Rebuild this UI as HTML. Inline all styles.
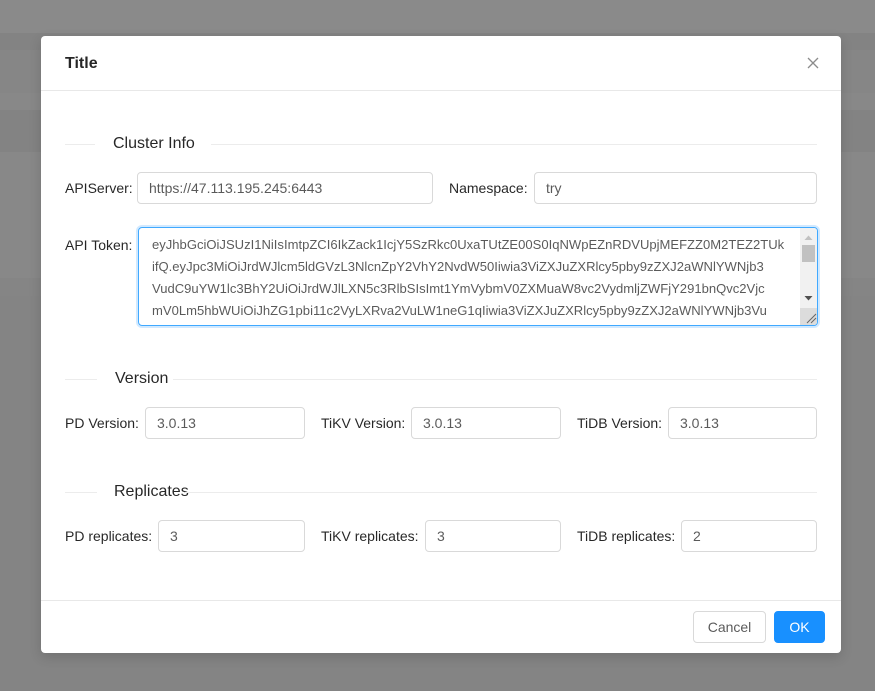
<!DOCTYPE html>
<html><head><meta charset="utf-8"><style>
*{box-sizing:border-box;margin:0;padding:0}
html,body{width:875px;height:691px;overflow:hidden}
body{position:relative;font-family:"Liberation Sans","Noto Sans CJK SC",sans-serif;font-size:14px;color:rgba(0,0,0,.85);background:#848484}
.band{position:absolute;left:0;width:875px}
.modal{position:absolute;left:41px;top:36px;width:800px;height:617px;background:#fff;border-radius:4px;box-shadow:0 4px 12px rgba(0,0,0,.15)}
.a{position:absolute}
.title{left:24px;top:18px;font-size:16px;font-weight:bold;color:rgba(0,0,0,.85);line-height:20px}
.hline{left:0;width:800px;height:1px;background:#e8e8e8}
.dl{height:1px;background:#ececec}
.dt{font-size:16px;line-height:20px;color:rgba(0,0,0,.85)}
.lbl{line-height:20px;color:rgba(0,0,0,.85);white-space:nowrap}
.inp{height:32px;border:1px solid #d9d9d9;border-radius:4px;padding:0 11px;line-height:30px;color:rgba(0,0,0,.65);white-space:nowrap}
.ta{border:1px solid #40a9ff;box-shadow:0 0 0 2px rgba(24,144,255,.2);border-radius:4px;overflow:hidden;color:rgba(0,0,0,.65)}
.ta .l{position:absolute;left:13px;line-height:22px;white-space:nowrap;font-size:13.05px;letter-spacing:0}
.btn{height:32px;border-radius:4px;line-height:30px;text-align:center;font-size:14px}
</style></head><body>
<div class="band" style="top:0;height:33px;background:#8a8a8a"></div>
<div class="band" style="top:33px;height:17px;background:#838383"></div>
<div class="band" style="top:50px;height:43px;background:#868686"></div>
<div class="band" style="top:93px;height:17px;background:#888"></div>
<div class="band" style="top:110px;height:42px;background:#838383"></div>
<div class="band" style="top:152px;height:126px;background:#888"></div>
<div class="band" style="top:278px;height:18px;background:#858585"></div>

<div class="modal">
  <div class="a title">Title</div>
  <svg class="a" style="left:766px;top:21px" width="12" height="12" viewBox="0 0 12 12"><path d="M1 1L11 11M11 1L1 11" stroke="#8c8c8c" stroke-width="1.3"/></svg>
  <div class="a hline" style="top:54px"></div>

  <div class="a dl" style="left:24px;top:108px;width:30px"></div>
  <div class="a dt" style="left:72px;top:98px">Cluster Info</div>
  <div class="a dl" style="left:170px;top:108px;width:606px"></div>

  <div class="a lbl" style="left:24px;top:142px">APIServer:</div>
  <div class="a inp" style="left:96px;top:136px;width:296px">https://47.113.195.245:6443</div>
  <div class="a lbl" style="left:408px;top:142px">Namespace:</div>
  <div class="a inp" style="left:493px;top:136px;width:283px">try</div>

  <div class="a lbl" style="left:24px;top:199px">API Token:</div>
  <div class="a ta" style="left:97px;top:191px;width:680px;height:99px">
    <div class="l" style="top:6px">eyJhbGciOiJSUzI1NiIsImtpZCI6IkZack1IcjY5SzRkc0UxaTUtZE00S0IqNWpEZnRDVUpjMEFZZ0M2TEZ2TUk</div>
    <div class="l" style="top:28px">ifQ.eyJpc3MiOiJrdWJlcm5ldGVzL3NlcnZpY2VhY2NvdW50Iiwia3ViZXJuZXRlcy5pby9zZXJ2aWNlYWNjb3</div>
    <div class="l" style="top:50px">VudC9uYW1lc3BhY2UiOiJrdWJlLXN5c3RlbSIsImt1YmVybmV0ZXMuaW8vc2VydmljZWFjY291bnQvc2Vjc</div>
    <div class="l" style="top:72px">mV0Lm5hbWUiOiJhZG1pbi11c2VyLXRva2VuLW1neG1qIiwia3ViZXJuZXRlcy5pby9zZXJ2aWNlYWNjb3Vu</div>
    <div class="a" style="left:661px;top:0;width:17px;height:97px;background:#f1f1f1"></div>
    <svg class="a" style="left:661px;top:0" width="17" height="97"><path d="M4.5 12L8.5 7.5L12.5 12Z" fill="#c1c1c1"/><rect x="2" y="17" width="13" height="17" fill="#c1c1c1"/><path d="M4.5 68L8.5 72.5L12.5 68Z" fill="#505050"/><rect x="0" y="80" width="17" height="17" fill="#dcdcdc"/><path d="M7 95L16 86M11 95L16 90" stroke="#666" stroke-width="1"/></svg>
  </div>

  <div class="a dl" style="left:24px;top:343px;width:32px"></div>
  <div class="a dt" style="left:74px;top:333px">Version</div>
  <div class="a dl" style="left:132px;top:343px;width:644px"></div>

  <div class="a lbl" style="left:24px;top:377px">PD Version:</div>
  <div class="a inp" style="left:104px;top:371px;width:160px">3.0.13</div>
  <div class="a lbl" style="left:280px;top:377px">TiKV Version:</div>
  <div class="a inp" style="left:370px;top:371px;width:150px">3.0.13</div>
  <div class="a lbl" style="left:536px;top:377px">TiDB Version:</div>
  <div class="a inp" style="left:627px;top:371px;width:149px">3.0.13</div>

  <div class="a dl" style="left:24px;top:456px;width:32px"></div>
  <div class="a dt" style="left:73px;top:446px">Replicates</div>
  <div class="a dl" style="left:144px;top:456px;width:632px"></div>

  <div class="a lbl" style="left:24px;top:490px">PD replicates:</div>
  <div class="a inp" style="left:117px;top:484px;width:147px">3</div>
  <div class="a lbl" style="left:280px;top:490px">TiKV replicates:</div>
  <div class="a inp" style="left:384px;top:484px;width:136px">3</div>
  <div class="a lbl" style="left:536px;top:490px">TiDB replicates:</div>
  <div class="a inp" style="left:640px;top:484px;width:136px">2</div>

  <div class="a hline" style="top:564px"></div>
  <div class="a btn" style="left:652px;top:575px;width:73px;border:1px solid #d9d9d9;color:rgba(0,0,0,.65);background:#fff">Cancel</div>
  <div class="a btn" style="left:733px;top:575px;width:51px;background:#1890ff;border:1px solid #1890ff;color:#fff">OK</div>
</div>
</body></html>
